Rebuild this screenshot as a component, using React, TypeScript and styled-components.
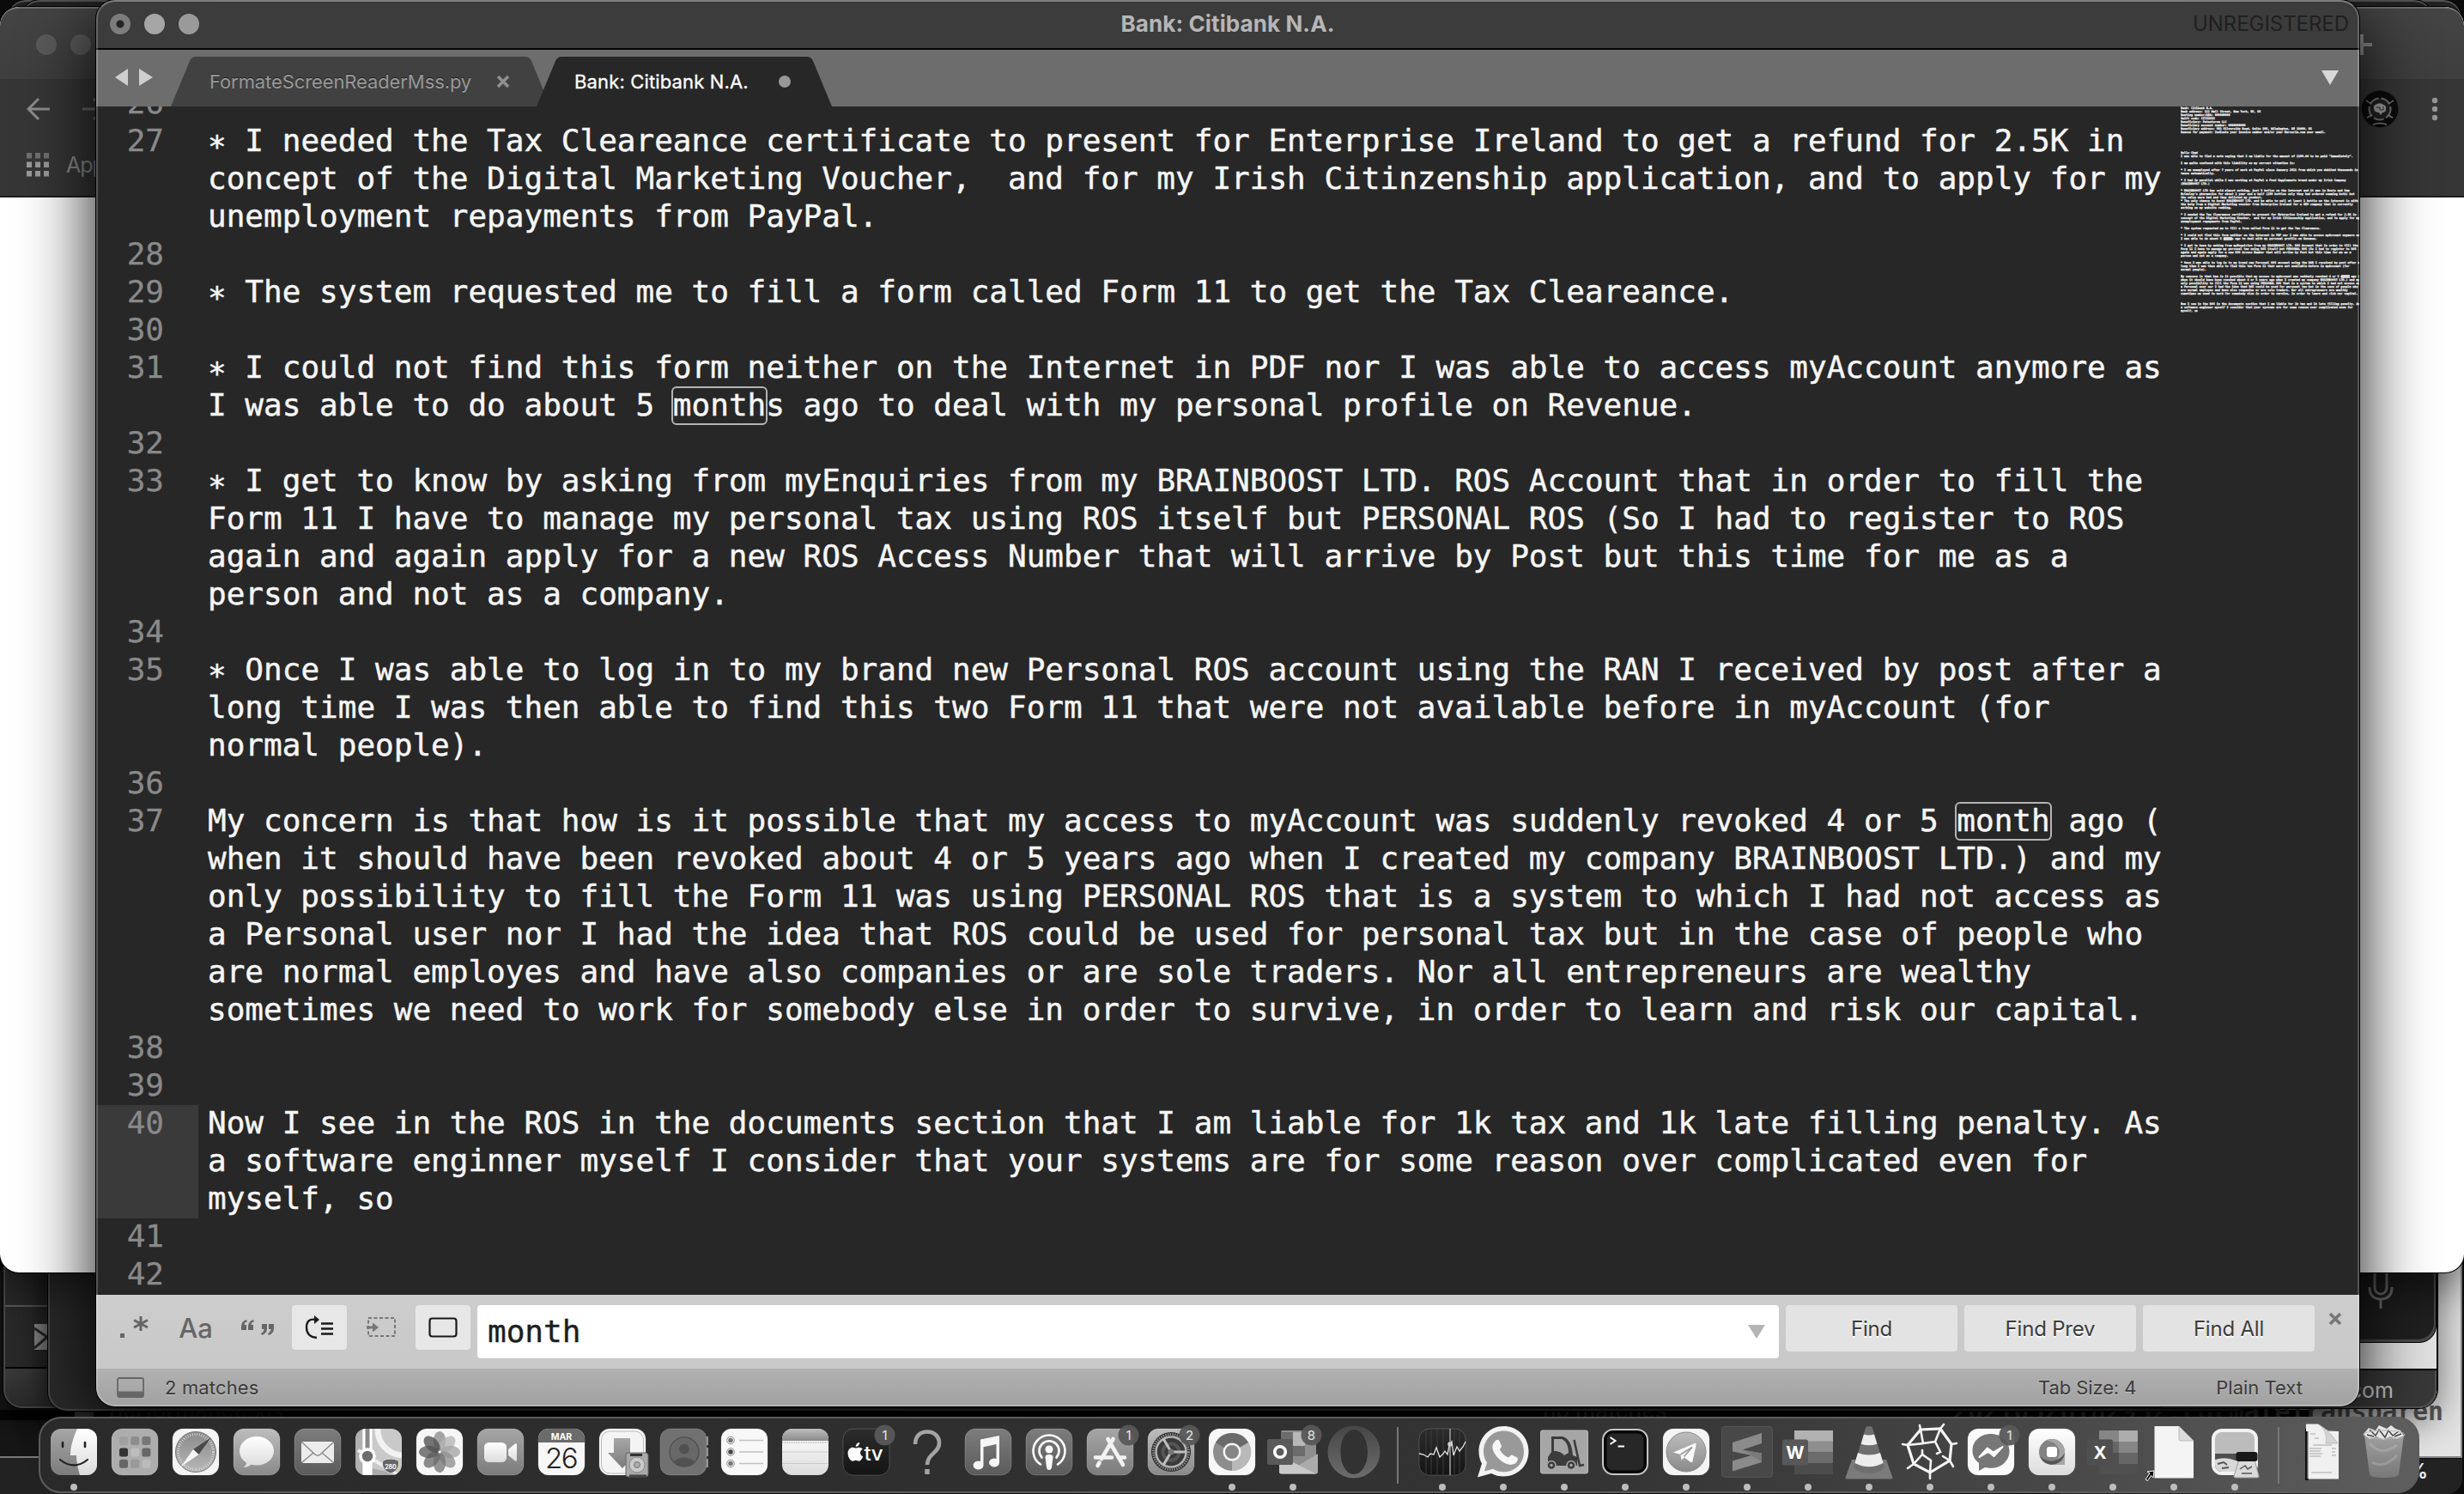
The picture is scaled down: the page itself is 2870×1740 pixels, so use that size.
import React from "react";
import styled, { createGlobalStyle, css } from "styled-components";

const UI = `Inter, "Liberation Sans", sans-serif`;
const MONO = `"DejaVu Sans Mono", "Liberation Mono", monospace`;

const Global = createGlobalStyle`
  html, body { margin: 0; background: #0b0b0b; }
  * { box-sizing: border-box; }
`;

const Desktop = styled.div`
  position: relative;
  width: 2870px;
  height: 1740px;
  overflow: hidden;
  background: #0c0c0c;
  font-family: ${UI};
`;

/* ---------- windows on the desktop ---------- */

const WindowFrame = styled.section<{ $x: number; $y: number; $w: number; $h: number }>`
  position: absolute;
  left: ${(p) => p.$x}px;
  top: ${(p) => p.$y}px;
  width: ${(p) => p.$w}px;
  height: ${(p) => p.$h}px;
  display: flex;
  flex-direction: column;
  overflow: hidden;
`;

const TopPeek = styled(WindowFrame)`
  background: #262626;
  border-radius: 22px 22px 0 0;
  border: 1px solid #000;
  box-shadow: inset 0 2px 0 #5a5a5a;
`;

const PaleWindow = styled(WindowFrame)`
  background: #e4e4e4;
  border-right: 2px solid #8a8a8a;
  border-bottom: 2px solid #8a8a8a;
`;

const FileName = styled.div`
  font: 700 29.7px/30px ${MONO};
  color: #5c5c5c;
  text-align: right;
  padding-right: 20px;
  white-space: pre;
`;

const MenuStrip = styled(WindowFrame)`
  background: #222;
  border-top: 1px solid #111;
  color: #eee;
  font: 600 24px/30px ${UI};
  align-items: flex-end;
  padding-right: 40px;
  border-radius: 0 0 18px 0;
`;

const LeftDesk = styled(WindowFrame)`
  background: linear-gradient(#1d1d1d, #141414);
`;
const LeftDeskFoot = styled.div`
  margin-top: auto;
  height: 44px;
  border-top: 2px solid #777;
  background: #222;
`;

const DarkWindow = styled(WindowFrame)`
  background: linear-gradient(90deg, #2a2a2a, #1d1d1d);
  border-radius: 0 0 22px 22px;
  border: 2px solid #474747;
  border-top: 0;
  box-shadow: 0 0 0 1px #000, 0 10px 40px rgba(0, 0, 0, 0.8);
`;
const MailRow = styled.div`
  height: 74px;
  margin-top: 120px;
  border-top: 2px solid #5a5a5a;
  border-bottom: 2px solid #000;
  display: flex;
  align-items: center;
  padding: 0 0 0 34px;
`;
const MailFoot = styled.div`
  flex: 1;
  background: linear-gradient(#3a3a3a, #2a2a2a);
`;

const PeekStrip = styled(WindowFrame)`
  flex-direction: row;
  align-items: flex-start;
  background: #050505;
`;
const PeekText = styled.span<{ $left: number; $size: number }>`
  margin-left: ${(p) => p.$left}px;
  font: 500 ${(p) => p.$size}px/${(p) => p.$size}px ${UI};
  color: #4a4a4a;
  margin-top: -12px;
  white-space: pre;
`;
const PeekBlock = styled.i`
  width: 22px;
  height: 10px;
  margin-left: 87px;
  background: #7a7a7a;
`;

const SideWindow = styled(WindowFrame)`
  background: linear-gradient(90deg, #8d8d8d, #e2e2e2 80%);
  border-radius: 0 0 22px 22px;
  border-right: 1px solid #000;
  box-shadow: 0 0 0 1px #000, 0 12px 46px rgba(0, 0, 0, 0.55);
`;
const MicPanel = styled.div`
  height: 164px;
  background: linear-gradient(#191919, #212121);
  border-radius: 0 0 20px 20px;
  border: 1px solid #000;
  box-shadow: inset -2px -3px 0 #4a4a4a;
  display: flex;
  justify-content: flex-end;
  align-items: flex-end;
  padding: 0 48px 38px 0;
`;
const SideFoot = styled.div`
  margin-top: auto;
  height: 46px;
  border-top: 2px solid #000;
  background: #383838;
  border-radius: 0 0 20px 20px;
  box-shadow: inset -2px -2px 0 #505050;
  color: #c8c8c8;
  font: 400 25px/46px ${UI};
  text-align: right;
  padding-right: 50px;
`;

const BrowserWindow = styled(WindowFrame)`
  background: #fff;
  border-radius: 22px;
  box-shadow: 0 0 0 1px #000, 0 16px 50px rgba(0, 0, 0, 0.55);
`;
const BrowserTabs = styled.div`
  height: 84px;
  background: linear-gradient(#444, #3e3e3e);
  border-top: 2px solid #6d6d6d;
  border-radius: 22px 22px 0 0;
  display: flex;
  align-items: center;
  justify-content: space-between;
  padding: 2px 106px 0 42px;
`;
const BrowserTools = styled.div`
  height: 138px;
  background: #363636;
  border-bottom: 2px solid #1c1c1c;
  display: grid;
  grid-template-columns: auto auto;
  grid-template-rows: 70px 59px;
  align-items: center;
  align-content: start;
  justify-content: space-between;
`;
const Cluster = styled.div<{ $gap: number; $pl?: number; $pr?: number }>`
  display: flex;
  align-items: center;
  gap: ${(p) => p.$gap}px;
  padding-left: ${(p) => p.$pl ?? 0}px;
  padding-right: ${(p) => p.$pr ?? 0}px;
`;
const AppsLabel = styled.span`
  font: 400 25px/30px ${UI};
  letter-spacing: -1px;
  color: #8b8b8b;
`;

const Light = styled.i<{ $c: string; $edited?: boolean }>`
  width: 24px;
  height: 24px;
  border-radius: 50%;
  background: ${(p) => (p.$edited ? `radial-gradient(circle, #242424 0 4px, ${p.$c} 5px)` : p.$c)};
`;

/* ---------- editor window ---------- */

const EditorWindow = styled(WindowFrame)`
  border-radius: 22px;
  background: #272727;
  box-shadow: 0 0 0 1px #000, 0 22px 84px rgba(0, 0, 0, 0.95);
  &::after {
    content: "";
    position: absolute;
    inset: 0;
    border-radius: 22px;
    border: 2px solid rgba(255, 255, 255, 0.22);
    border-top-color: rgba(255, 255, 255, 0.34);
    pointer-events: none;
  }
`;

const TitleBar = styled.header`
  flex: none;
  height: 58px;
  background: #3c3c3c;
  border-bottom: 2px solid #060606;
  display: grid;
  grid-template-columns: 1fr auto 1fr;
  align-items: center;
`;
const Title = styled.h1`
  margin: 0;
  font: 700 26px/56px ${UI};
  letter-spacing: 0.1px;
  color: #b6b6b6;
`;
const Unregistered = styled.span`
  justify-self: end;
  padding-right: 12px;
  font: 400 24px/56px ${UI};
  letter-spacing: -0.05px;
  color: #202020;
`;

const TabBar = styled.nav`
  flex: none;
  height: 66px;
  background: #6d6d6d;
  display: flex;
  align-items: flex-end;
`;
const TabArrows = styled.div`
  width: 87px;
  height: 66px;
  padding: 0 0 2px 22px;
  display: flex;
  align-items: center;
`;
const Tab = styled.div<{ $w: number; $active?: boolean }>`
  width: ${(p) => p.$w}px;
  height: 58px;
  display: flex;
  align-items: center;
  justify-content: space-between;
  font: 400 22px/58px ${UI};
  white-space: nowrap;
  clip-path: path("M0 58 L22 5 Q24 0 30 0 H${(p) => p.$w - 30} Q${(p) => p.$w - 24} 0 ${(p) => p.$w - 22} 5 L${(p) => p.$w} 58 Z");
  ${(p) =>
    p.$active
      ? css`
          margin-left: -16px;
          padding: 0 48px 0 44px;
          background: #272727;
          color: #fff;
          letter-spacing: 0.15px;
          -webkit-text-stroke: 0.3px #fff;
        `
      : css`
          padding: 0 47px 0 45px;
          background: #414141;
          color: #999;
          letter-spacing: -0.1px;
          text-shadow: 0 -1px 0 #222;
        `}
`;
const ModifiedDot = styled.i`
  width: 14px;
  height: 14px;
  border-radius: 50%;
  background: #979797;
`;
const TabMenu = styled.div`
  margin-left: auto;
  height: 66px;
  display: flex;
  align-items: center;
  padding: 0 24px 2px 0;
`;

const Body = styled.main`
  flex: 1;
  min-height: 0;
  display: flex;
  overflow: hidden;
`;
const Lines = styled.div`
  flex: 1;
  margin-top: -25px;
`;
const Line = styled.div`
  display: flex;
  font: 36px/41px ${MONO};
`;
const LineNo = styled.div<{ $active?: boolean }>`
  width: 119px;
  padding-right: 40px;
  text-align: right;
  color: #898989;
  -webkit-text-stroke: 0.3px #898989;
  background: ${(p) => (p.$active ? "#3a3a3a" : "transparent")};
`;
const LineText = styled.div`
  padding-left: 11px;
  white-space: pre;
  color: #f6f6f6;
  -webkit-text-stroke: 0.45px #f6f6f6;
`;
const Row = styled.div`
  height: 44px;
`;
const Star = styled.span`
  line-height: 0;
  vertical-align: -7px;
`;
const Match = styled.mark`
  position: relative;
  background: none;
  color: inherit;
  &::after {
    content: "";
    position: absolute;
    inset: -1px -2px -3px -2px;
    border: 2px solid #b4b4b4;
    border-radius: 6px;
  }
`;

const Minimap = styled.aside`
  width: 208px;
  overflow: hidden;
  font: 700 3.3px/4px ${MONO};
  color: #f4f4f4;
  -webkit-text-stroke: 0.25px #f4f4f4;
  white-space: pre;
`;
const MiniRow = styled.div`
  height: 4px;
`;
const MiniMatch = styled.mark`
  background: #bdbdbd;
  color: #bdbdbd;
`;

const FindPanel = styled.div`
  flex: none;
  height: 86px;
  background: linear-gradient(#cdcdcd, #c8c8c8);
  display: flex;
  align-items: flex-start;
  gap: 8px;
  padding: 12px 0 0 12px;
`;
const Toggle = styled.button<{ $on?: boolean }>`
  width: 64px;
  height: 52px;
  padding: 0;
  border: 0;
  border-radius: 4px;
  display: grid;
  place-items: center;
  background: ${(p) => (p.$on ? "#e7e7e7" : "transparent")};
  color: #666;
  font: 500 31px/54px ${UI};
`;
const FindInput = styled.div`
  width: 1516px;
  height: 62px;
  border-radius: 4px;
  background: #fff;
  display: flex;
  align-items: center;
  justify-content: space-between;
  padding: 0 16px 0 12px;
  font: 36px/56px ${MONO};
  color: #1e1e1e;
  -webkit-text-stroke: 0.4px #1e1e1e;
`;
const FindButton = styled.button`
  width: 200px;
  height: 54px;
  padding: 2px 0 0;
  border: 0;
  border-radius: 4px;
  background: #e3e3e3;
  color: #3c3c3c;
  font: 400 24px/52px ${UI};
  letter-spacing: -0.2px;
  text-shadow: 0 2px 0 #fff;
`;
const CloseFind = styled.div`
  padding: 8px 0 0 8px;
`;

const StatusBar = styled.footer`
  flex: none;
  height: 44px;
  background: linear-gradient(#b1b1b1, #a1a1a1);
  display: flex;
  align-items: center;
  padding: 0 66px 0 24px;
  font: 400 22px/42px ${UI};
  color: #3a3a3a;
  text-shadow: 0 1px 0 #c8c8c8;
`;
const StatusText = styled.span<{ $ml: string; $ls?: number }>`
  margin-left: ${(p) => p.$ml};
  letter-spacing: ${(p) => p.$ls ?? 0}px;
`;

/* ---------- dock ---------- */

const DockBar = styled.div`
  position: absolute;
  left: 45px;
  top: 1650px;
  width: 2773px;
  height: 89px;
  padding: 7px 0 0 3px;
  display: flex;
  border-radius: 26px;
  border: 2px solid #5c5c5c;
  background: linear-gradient(90deg, #2a2a2a, #303030 45%, #343434 66%, #474747 84%, #5e5e5e);
`;
const Slot = styled.div`
  width: 71px;
  display: flex;
  flex-direction: column;
  align-items: center;
  svg { display: block; overflow: visible; }
`;
const Running = styled.i`
  width: 8px;
  height: 8px;
  margin-top: 5px;
  border-radius: 50%;
  background: #bcbcbc;
`;
const Divider = styled.div`
  width: 32px;
  display: flex;
  justify-content: center;
  &::before {
    content: "";
    width: 2px;
    height: 66px;
    margin-top: 3px;
    background: #767676;
  }
`;

/* ---------- document ---------- */

type Entry = { n: number; rows: string[] };

const entries: Entry[] = [
  { n: 26, rows: [""] },
  {
    n: 27,
    rows: [
      "* I needed the Tax Cleareance certificate to present for Enterprise Ireland to get a refund for 2.5K in",
      "concept of the Digital Marketing Voucher,  and for my Irish Citinzenship application, and to apply for my",
      "unemployment repayments from PayPal.",
    ],
  },
  { n: 28, rows: [""] },
  { n: 29, rows: ["* The system requested me to fill a form called Form 11 to get the Tax Cleareance."] },
  { n: 30, rows: [""] },
  {
    n: 31,
    rows: [
      "* I could not find this form neither on the Internet in PDF nor I was able to access myAccount anymore as",
      "I was able to do about 5 months ago to deal with my personal profile on Revenue.",
    ],
  },
  { n: 32, rows: [""] },
  {
    n: 33,
    rows: [
      "* I get to know by asking from myEnquiries from my BRAINBOOST LTD. ROS Account that in order to fill the",
      "Form 11 I have to manage my personal tax using ROS itself but PERSONAL ROS (So I had to register to ROS",
      "again and again apply for a new ROS Access Number that will arrive by Post but this time for me as a",
      "person and not as a company.",
    ],
  },
  { n: 34, rows: [""] },
  {
    n: 35,
    rows: [
      "* Once I was able to log in to my brand new Personal ROS account using the RAN I received by post after a",
      "long time I was then able to find this two Form 11 that were not available before in myAccount (for",
      "normal people).",
    ],
  },
  { n: 36, rows: [""] },
  {
    n: 37,
    rows: [
      "My concern is that how is it possible that my access to myAccount was suddenly revoked 4 or 5 month ago (",
      "when it should have been revoked about 4 or 5 years ago when I created my company BRAINBOOST LTD.) and my",
      "only possibility to fill the Form 11 was using PERSONAL ROS that is a system to which I had not access as",
      "a Personal user nor I had the idea that ROS could be used for personal tax but in the case of people who",
      "are normal employes and have also companies or are sole traders. Nor all entrepreneurs are wealthy",
      "sometimes we need to work for somebody else in order to survive, in order to learn and risk our capital.",
    ],
  },
  { n: 38, rows: [""] },
  { n: 39, rows: [""] },
  {
    n: 40,
    rows: [
      "Now I see in the ROS in the documents section that I am liable for 1k tax and 1k late filling penalty. As",
      "a software enginner myself I consider that your systems are for some reason over complicated even for",
      "myself, so",
    ],
  },
  { n: 41, rows: [""] },
  { n: 42, rows: [""] },
];

const preface = [
  "Bank: Citibank N.A.",
  "Bank address: 111 Wall Street, New York, NY, US",
  "Routing number/ABA: 000000000",
  "Swift code: CITIUS33",
  "Beneficiary: Patentorea LLC",
  "Beneficiary account number: 0000000000",
  "Beneficiary address: 501 Silverside Road, Suite 105, Wilmington, DE 19809, US",
  "Reason for payment: Indicate your invoice number and/or your Mercuria.com user email.",
  "", "", "", "", "",
  "Hello Chad",
  "I was able to find a note saying that I am liable for the amount of 2100.84 to be paid \"immediately\".",
  "",
  "I am quite confused with this liability as my current situation is:",
  "",
  "* I am unemployed after 7 years of work at PayPal since January 2021 from which you debited thousands in",
  "taxes automatically.",
  "",
  "* I had in parallel while I was working at PayPal a Food Supplements brand under my Irish Company",
  "(BRAINBOOST LTD.)",
  "",
  "* BRAINBOOST LTD has sold almost nothing, just 5 botles on the internet and it was in Boots and Sam",
  "McCauley's pharmacies for about 1 year and a half (250 bottles only they had ordered summing both) but",
  "the sales were bad and they delisted my product.",
  "* The only chance to boost BRAINBOOST LTD. and be able to sell at least 1 bottle on the internet is with",
  "the help from a Digital Marketing voucher from Enterprise Ireland for a SEO company that is currently",
  "working on my website ranking.",
];

const miniRows = [...preface, ...entries.flatMap((e) => e.rows)];

const renderRow = (text: string) =>
  text.split(/(month|^\*)/).map((part, i) =>
    part === "month" ? <Match key={i}>{part}</Match> : part === "*" ? <Star key={i}>*</Star> : part
  );

const renderMini = (text: string) =>
  text.split(/(month)/).map((part, i) => (part === "month" ? <MiniMatch key={i}>{part}</MiniMatch> : part));

/* ---------- dock artwork ---------- */

const HiddenDefs = styled.svg`
  position: absolute;
  width: 0;
  height: 0;
`;

const Defs = () => (
  <HiddenDefs>
    <defs>
      {(
        [
          ["gLight", "#ffffff", "#dcdcdc"],
          ["gMid", "#bdbdbd", "#8a8a8a"],
          ["gMidR", "#8a8a8a", "#b8b8b8"],
          ["gGrey", "#7d7d7d", "#5b5b5b"],
          ["gDark", "#2c2c2c", "#141414"],
          ["gSteel", "#a6a6a6", "#7c7c7c"],
          ["gOpera", "#464646", "#6c6c6c"],
        ] as const
      ).map(([id, a, b]) => (
        <linearGradient id={id} key={id} x1="0" y1="0" x2="0" y2="1">
          <stop offset="0" stopColor={a} />
          <stop offset="1" stopColor={b} />
        </linearGradient>
      ))}
      <clipPath id="tileClip">
        <rect x="5" y="5" width="54" height="54" rx="12" />
      </clipPath>
    </defs>
  </HiddenDefs>
);

const Tile = ({ fill }: { fill: string }) => (
  <rect x="5" y="5" width="54" height="54" rx="12" fill={fill} stroke="rgba(255,255,255,.18)" />
);

const Badge = ({ n }: { n: number }) => (
  <g>
    <circle cx="53.5" cy="12.5" r="12" fill="#585858" fillOpacity=".95" />
    <text x="53.5" y="18" fontSize="15" fontFamily="Inter, sans-serif" textAnchor="middle" fill="#e6e6e6">
      {n}
    </text>
  </g>
);

const petals = [0, 45, 90, 135, 180, 225, 270, 315];

const art: Record<string, React.ReactNode> = {
  finder: (
    <g clipPath="url(#tileClip)">
      <rect x="5" y="5" width="54" height="54" fill="url(#gSteel)" />
      <path d="M36 5 C30 18 28 28 28 36 H35 C35 45 37 52 39 59 H60 V5Z" fill="url(#gLight)" />
      <path d="M19 21v5M45 21v5" stroke="#222" strokeWidth="2.6" strokeLinecap="round" />
      <path d="M16 41 Q32 54 48 41" stroke="#222" strokeWidth="2.2" fill="none" strokeLinecap="round" />
    </g>
  ),
  launchpad: (
    <g>
      <Tile fill="#adadad" />
      {["#a0a0a0", "#8d8d8d", "#777", "#333", "#bdbdbd", "#666", "#666", "#999", "#bbb"].map((c, i) => (
        <rect key={i} x={14 + (i % 3) * 13.2} y={14 + Math.floor(i / 3) * 13.4} width="10" height="10" rx="2.5" fill={c} />
      ))}
    </g>
  ),
  safari: (
    <g>
      <Tile fill="#f4f4f4" />
      <circle cx="32" cy="32" r="23.5" fill="url(#gMidR)" stroke="#777" />
      <circle cx="32" cy="32" r="20.5" fill="none" stroke="#ddd" strokeWidth="3" strokeDasharray=".8 1.9" />
      <path d="M50 15 L35.5 35 L29 29Z" fill="#4a4a4a" />
      <path d="M15 49 L35.5 35 L29 29Z" fill="#f6f6f6" />
    </g>
  ),
  messages: (
    <g>
      <Tile fill="url(#gMid)" />
      <path d="M32 14c-11 0-20 7.500-20 17 0 6 3.300 10.500 8 13.500 0 2-1.500 4-3.500 5.500 4 0 7-1.500 9-3.300 2 .5 4.300.8 6.500.8 11 0 20-7 20-16.500S43 14 32 14Z" fill="url(#gLight)" />
    </g>
  ),
  mail: (
    <g>
      <Tile fill="url(#gGrey)" />
      <rect x="13" y="20" width="38" height="25" rx="3" fill="#ececec" />
      <path d="M14 21 29 35q3 2.500 6 0L50 21M14 44l13-11M50 44 37 33" stroke="#888" strokeWidth="1.4" fill="none" />
    </g>
  ),
  maps: (
    <g clipPath="url(#tileClip)">
      <rect x="5" y="5" width="54" height="54" fill="#c9c9c9" />
      <path d="M5 5h8v54H5z" fill="#b0b0b0" />
      <path d="M59 36A30 30 0 0 1 31 5" stroke="#f2f2f2" strokeWidth="7" fill="none" />
      <path d="M20 50 L59 59 H20Z" fill="#aaa" />
      <path d="M8 30 L60 62" stroke="#eee" strokeWidth="4" />
      <path d="M19 5v54" stroke="#fff" strokeWidth="11" />
      <path d="M19 5v30" stroke="#888" strokeWidth="5" />
      <circle cx="19" cy="37" r="8" fill="#6d6d6d" stroke="#fff" strokeWidth="3.5" />
      <path d="M37 42q9-4 18 0c2 7-2 13-9 15-7-2-11-8-9-15Z" fill="#666" stroke="#ddd" />
      <text x="46" y="52" fontSize="7" fontFamily="Inter, sans-serif" fontWeight="700" textAnchor="middle" fill="#fff">280</text>
    </g>
  ),
  photos: (
    <g>
      <Tile fill="#f6f6f6" />
      {petals.map((a, i) => (
        <ellipse key={a} cx="32" cy="19.5" rx="7.2" ry="11.5" fill={["#8d8d8d", "#b5b5b5", "#a5a5a5", "#8f8f8f", "#777", "#6c6c6c", "#5c5c5c", "#505050"][i]} fillOpacity=".78" transform={`rotate(${a} 32 32)`} />
      ))}
      <circle cx="32" cy="32" r="1.5" fill="#fff" />
    </g>
  ),
  facetime: (
    <g>
      <Tile fill="url(#gSteel)" />
      <rect x="13" y="21" width="26" height="23" rx="5.5" fill="url(#gLight)" />
      <path d="M41 29 49 22.500q2-1 2 1v18q0 2-2 1L41 36Z" fill="url(#gLight)" />
    </g>
  ),
  calendar: (
    <g>
      <Tile fill="#f7f7f7" />
      <path d="M5 21V17A12 12 0 0 1 17 5H47A12 12 0 0 1 59 17V21Z" fill="#6b6b6b" />
      <text x="32" y="17.5" fontSize="10.5" fontFamily="Inter, sans-serif" fontWeight="700" textAnchor="middle" fill="#fff">MAR</text>
      <text x="31.5" y="51" fontSize="33" fontFamily="Inter, sans-serif" fontWeight="300" letterSpacing="-1.5" textAnchor="middle" fill="#222">26</text>
    </g>
  ),
  installer: (
    <g>
      <Tile fill="#f4f4f4" />
      <rect x="7.5" y="8" width="49" height="49" rx="10" fill="none" stroke="#bbb" />
      <path d="M22 16h19v17h8L32 51 15 33h7Z" fill="url(#gSteel)" />
      <rect x="36" y="33" width="26" height="28" rx="3" fill="#a9a9a9" stroke="#666" />
      <circle cx="49" cy="47" r="9" fill="#c9c9c9" stroke="#888" />
      <circle cx="49" cy="47" r="3.5" fill="#aaa" stroke="#777" />
      <path d="M41 35.500h14" stroke="#333" strokeWidth="3" />
      <path d="M40 60h20" stroke="#444" strokeWidth="3" />
    </g>
  ),
  contacts: (
    <g>
      <path d="M57 14h4v10h-4zM57 27h4v10h-4zM57 40h4v10h-4z" fill="#8f8f8f" />
      <Tile fill="#717171" />
      <circle cx="33" cy="32" r="17" fill="#686868" stroke="#525252" strokeWidth="1.5" />
      <circle cx="33" cy="28.5" r="6" fill="#515151" />
      <path d="M21 43q12-9 24 0-4.500 6-12 6t-12-6Z" fill="#515151" />
    </g>
  ),
  reminders: (
    <g>
      <Tile fill="#f8f8f8" />
      {[18.5, 32, 45.5].map((y, i) => (
        <g key={y}>
          <circle cx="16" cy={y} r="4.3" fill="none" stroke="#888" strokeWidth="1" />
          <circle cx="16" cy={y} r="2.8" fill={i === 1 ? "#444" : "#777"} />
          <path d={`M26 ${y}h28`} stroke="#c2c2c2" strokeWidth="1.5" />
        </g>
      ))}
    </g>
  ),
  notes: (
    <g clipPath="url(#tileClip)">
      <rect x="5" y="5" width="54" height="54" fill="url(#gLight)" />
      <rect x="5" y="5" width="54" height="14" fill="url(#gMid)" />
      <path d="M5 21h54" stroke="#999" strokeDasharray="1 1" />
      <path d="M5 32h54M5 45.500h54" stroke="#ccc" />
    </g>
  ),
  tv: (
    <g>
      <Tile fill="url(#gDark)" />
      <path
        transform="translate(-4.500 -3.500) scale(1.14)"
        d="M24.500 26.500c-.9 0-2 .7-3 .7s-2-.7-3.300-.7c-2.600 0-5 2.200-5 6 0 4 2.700 8 4.900 8 1.200 0 1.800-.8 3.300-.8s2 .8 3.200.8c2 0 3.600-3.200 4-4.700-3.700-1.600-3.200-6.300-.2-7.500-.9-1.200-2.400-1.800-3.900-1.800ZM21.300 25.800c2.500 0 4-2.300 3.800-4.300-2.300.3-4 2.200-3.800 4.300Z"
        fill="#fff"
      />
      <text x="29.5" y="41.5" fontSize="24" fontFamily="Inter, sans-serif" fontWeight="500" letterSpacing="-.5" fill="#fff">tv</text>
      <Badge n={1} />
    </g>
  ),
  question: (
    <g>
      <path d="M18 23c0-9 5.500-14.500 14-14.500S46 14 46 22c0 11-14 12-14 25" stroke="#a4a4a4" strokeWidth="4.6" fill="none" />
      <rect x="29.2" y="52" width="5.500" height="6" fill="#a4a4a4" />
    </g>
  ),
  music: (
    <g>
      <Tile fill="url(#gGrey)" />
      <path d="M23 17.500 45 13v31.500a6 5 0 1 1-3.500-4.600V23l-15 3.200V47.500A6 5 0 1 1 23 43Z" fill="#f6f6f6" />
    </g>
  ),
  podcasts: (
    <g>
      <Tile fill="url(#gGrey)" />
      <g fill="none" stroke="#fff" strokeWidth="2.6" strokeLinecap="round">
        <path d="M22 46.500A18.500 18.500 0 1 1 42 46.500" />
        <path d="M23.500 38.500A11.500 11.500 0 1 1 40.500 38.500" />
      </g>
      <circle cx="32" cy="29" r="4.5" fill="#fff" />
      <path d="M27.500 38q0-3 4.500-3t4.500 3l-1.500 12q-.5 3-3 3t-3-3Z" fill="#fff" />
    </g>
  ),
  appstore: (
    <g>
      <Tile fill="url(#gSteel)" />
      <g stroke="#f2f2f2" strokeWidth="4.6" strokeLinecap="round" fill="none">
        <path d="M35.500 17 22 40M19.500 44.500l-2 3.500M29.500 17 47 47M15 38.500h19M42 38.500h7" />
      </g>
      <Badge n={1} />
    </g>
  ),
  settings: (
    <g>
      <Tile fill="url(#gMid)" />
      <circle cx="32" cy="32" r="23" fill="#2b2b2b" />
      <circle cx="32" cy="32" r="20.5" fill="none" stroke="#8a8a8a" strokeWidth="3" strokeDasharray="1.500 1.200" />
      <circle cx="32" cy="32" r="17.5" fill="#3a3a3a" stroke="#b5b5b5" strokeWidth="2.5" />
      <circle cx="32" cy="32" r="9.5" fill="none" stroke="#555" strokeWidth="4" />
      <path d="M32 32h18M32 32l-9-15.500M32 32l-9 15.500" stroke="#c0c0c0" strokeWidth="3" />
      <circle cx="32" cy="32" r="3.5" fill="#777" />
      <Badge n={2} />
    </g>
  ),
  chrome: (
    <g>
      <Tile fill="#f6f6f6" />
      <circle cx="32" cy="32" r="22" fill="#8d8d8d" />
      <path d="M32 32 L12.900 21A22 22 0 0 1 51.100 21Z" fill="#6a6a6a" />
      <path d="M32 32 L51.100 21A22 22 0 0 1 32 54Z" fill="#b9b9b9" />
      <circle cx="32" cy="32" r="10.5" fill="#f6f6f6" />
      <circle cx="32" cy="32" r="8" fill="#858585" />
    </g>
  ),
  outlook: (
    <g>
      <rect x="18" y="7" width="41" height="50" rx="2" fill="#8e8e8e" />
      <path d="M18 9h14v16H18zM32 25h14v12H32z" fill="#6c6c6c" />
      <path d="M32 9h14v16H32z" fill="#b8b8b8" />
      <path d="M16 36 38 48 61 34V55q0 2.500-2.500 2.500H18.500q-2.500 0-2.500-2.500Z" fill="#ababab" />
      <path d="M16 36 59 57.500H18.500q-2.500 0-2.500-2.500Z" fill="#c9c9c9" />
      <rect x="2" y="17" width="30" height="30" rx="2.5" fill="#5a5a5a" />
      <circle cx="17" cy="32" r="6.3" fill="none" stroke="#fff" strokeWidth="3.6" />
      <Badge n={8} />
    </g>
  ),
  opera: (
    <path
      fillRule="evenodd"
      d="M32 1.500A30.500 30.500 0 0 1 32 62.500A30.500 30.500 0 0 1 32 1.500ZM32 6C23 6 16.500 17.500 16.500 32S23 58 32 58 48 46.500 48 32 41 6 32 6Z"
      fill="url(#gOpera)"
    />
  ),
  activity: (
    <g>
      <Tile fill="url(#gDark)" />
      <path d="M13 6v52M19 6v52M26 6v52M33 6v52M46 6v52M52 6v52" stroke="#3c3c3c" />
      <path d="M41 5v54" stroke="#a2a2a2" strokeWidth="1.5" />
      <path d="M5 34l5 1 5 3 3-4 4 1 3-8 4 11 4-4 2-3 3 4 2-10 3-5 2 16 4-10 3 5 4-5 3-6" stroke="#e2e2e2" strokeWidth="1.3" fill="none" />
      <circle cx="41" cy="23" r="2.8" fill="#ccc" />
    </g>
  ),
  whatsapp: (
    <g>
      <path d="M32.500 2C16 2 3.500 15 3.500 31.500c0 5.500 1.300 10 3.500 14L2 61.500 18 57c4.500 2.500 9 3.500 14.500 3.500C49 60.500 61.500 48 61.500 31.500S49 2 32.500 2Z" fill="#f3f3f3" />
      <path d="M32.500 7.500c-13.500 0-23.500 10.500-23.500 24 0 5 1.500 9.500 4 13l-3 10 10-2.800c3.500 2.300 8 3.600 12.500 3.600C46 55.300 56 45 56 31.500S46 7.500 32.500 7.500Z" fill="#999" />
      <path d="M23.500 18.500c2-1.500 3.500-.5 4 .7l2.300 5.500c.4 1-.2 2.200-2 4.200 2.500 5 6 8 10.500 9.700 1.500-1.300 2.500-3.200 3.800-3l6 3c1.200.8.8 3-.3 5-3 4-8 4-13 2C27 42 20 33.500 19.300 27c-.3-3.500 1.700-6.500 4.200-8.500Z" fill="#f7f7f7" />
    </g>
  ),
  forklift: (
    <g>
      <rect x="4.5" y="7" width="55" height="50" rx="2" fill="#a6a6a6" stroke="#bcbcbc" />
      <path d="M17 14h13c7 2 11 9 12 22l5 2v10H13V38l4-6Z" fill="#3c3c3c" />
      <path d="M20 17h9c5 2 8 8 8 16l-5 3c-5-5-9-5-12-5Z" fill="#a6a6a6" />
      <path d="M43.500 18 50 48l5-1" stroke="#3c3c3c" strokeWidth="2.6" fill="none" />
      <circle cx="17" cy="47.5" r="5" fill="#3c3c3c" stroke="#a6a6a6" strokeWidth="1.5" />
      <circle cx="40" cy="47.5" r="5" fill="#3c3c3c" stroke="#a6a6a6" strokeWidth="1.5" />
      <circle cx="17" cy="47.5" r="1.8" fill="#a6a6a6" />
      <circle cx="40" cy="47.5" r="1.8" fill="#a6a6a6" />
    </g>
  ),
  terminal: (
    <g>
      <rect x="6" y="6" width="52" height="52" rx="12" fill="#050505" stroke="#c6c6c6" strokeWidth="2" />
      <rect x="10.5" y="10.5" width="43" height="43" rx="7" fill="#272727" />
      <path d="M14.500 15l6 4-6 4M23.500 25.500h7.500" stroke="#fff" strokeWidth="2" fill="none" />
    </g>
  ),
  telegram: (
    <g>
      <Tile fill="#f4f4f4" />
      <circle cx="32" cy="32" r="23" fill="url(#gMid)" stroke="#888" />
      <path d="M17 32.500 42 22q2-.6 1.600 1.600L39.500 43q-.8 2-2.600.8L30 38.500l-3.500 3-1-6.500Z" fill="#fafafa" />
      <path d="M25.500 35 39 26.500 29.500 37.500" stroke="#999" strokeWidth="1.5" fill="none" />
    </g>
  ),
  sublime: (
    <g>
      <rect x="2.5" y="2.5" width="59" height="59" rx="3" fill="#484848" stroke="#555" />
      <path d="M15 21 49 10v12L26.500 29.500 49 33.500V44L15 54.500V42.500L37 36 15 31.500Z" fill="#8b8b8b" />
      <path d="M26.500 29.500 49 33.500V44L37 36Z" fill="#7a7a7a" />
    </g>
  ),
  word: (
    <g>
      <rect x="16" y="7" width="45" height="13" fill="#b2b2b2" />
      <rect x="16" y="19.5" width="45" height="13" fill="#8e8e8e" />
      <rect x="16" y="32.5" width="45" height="13" fill="#6c6c6c" />
      <rect x="16" y="45" width="45" height="13" fill="#4c4c4c" />
      <rect x="2" y="17.5" width="30" height="30" rx="2.5" fill="#585858" />
      <text x="17" y="40" fontSize="20.5" fontFamily="Inter, sans-serif" fontWeight="700" textAnchor="middle" fill="#fff">W</text>
    </g>
  ),
  vlc: (
    <g>
      <path d="M12 41h40l7.500 21q.3 1.500-1.500 1.500H6q-1.800 0-1.500-1.500Z" fill="#7b7b7b" />
      <path d="M28 4q.8-2 4-2t4 2l14 46q-5 7-18 7t-18-7Z" fill="#6f6f6f" />
      <path d="M26 11.500q6 2 12 0l3.400 11.200q-9.400 3-18.800 0Z" fill="#ededed" />
      <path d="M19 33q13 5 26 0l3.600 12q-16.600 8.500-33.200 0Z" fill="#ededed" />
    </g>
  ),
  spider: (
    <g stroke="#f5f5f5" strokeWidth="3" strokeLinecap="round" fill="none">
      <path d="M21 6 44 5 57 23 55 42 32 56 13 46 6 24Z" strokeWidth="3.2" />
      <path d="M21 6 20 1M44 5l4-5M57 23l6-1M55 42l4 7M32 56v7M13 46l-7 5M6 24 0 23M21 6l3 16-18 2M24 22l14-2 6-15M38 20l6 12-4 2M13 46l10-11 10 7-1 14M23 35l0-5M55 42l-8-5" strokeWidth="2.6" />
    </g>
  ),
  messenger: (
    <g>
      <Tile fill="#fafafa" />
      <path d="M32 11C19.500 11 10.500 19.500 10.500 30.500c0 6 2.800 11 7.500 14.500V54l7-4c2 .5 4.500.8 7 .8C44.500 50.800 53.500 42 53.500 31S44.500 11 32 11Z" fill="#777" />
      <path d="M18.500 38 28 27.500l6.500 5 11-6.500-10 11-6.500-5Z" fill="#fff" stroke="#fff" strokeWidth="2" strokeLinejoin="round" />
      <Badge n={1} />
    </g>
  ),
  recorder: (
    <g>
      <Tile fill="url(#gLight)" />
      <circle cx="32" cy="32" r="15" fill="#828282" />
      <path d="M32 17a15 15 0 0 1 15 15V47H32A20 20 0 0 0 41 32 16 16 0 0 0 25 19Z" fill="#a5a5a5" />
      <path d="M18 37a15 15 0 0 0 29-4 18 18 0 0 1-29 4Z" fill="#555" />
      <rect x="26" y="26" width="12" height="12" rx="3" fill="#fff" />
    </g>
  ),
  excel: (
    <g>
      <rect x="16" y="7" width="45" height="51" rx="2" fill="#505050" />
      <path d="M16 7h23v13H16zM39 20h22v13H39z" fill="#868686" />
      <path d="M39 7h22v13H39z" fill="#adadad" />
      <path d="M16 20h23v13H16zM39 33h22v13H39z" fill="#666" />
      <rect x="2" y="17.5" width="30" height="30" rx="2.5" fill="#4f4f4f" />
      <text x="17" y="40" fontSize="20.5" fontFamily="Inter, sans-serif" fontWeight="700" textAnchor="middle" fill="#fff">X</text>
    </g>
  ),
  document: (
    <g>
      <path d="M9.500 2H38L55 19V62.500H9.500Z" fill="#f4f4f4" />
      <path d="M38 2 55 19H40q-2 0-2-2Z" fill="#dcdcdc" stroke="#aaa" strokeWidth=".7" />
      <path d="M-1 64l5-7-3-2 8-1-1 8-2.500-2.500-4 6Z" fill="#111" stroke="#fff" strokeWidth="1" />
    </g>
  ),
  preview: (
    <g>
      <rect x="5" y="5" width="54" height="54" rx="12" fill="#f2f2f2" />
      <rect x="9" y="9" width="46" height="46" rx="8" fill="#bcbcbc" />
      <path d="M9 34h46v13a8 8 0 0 1-8 8H17a8 8 0 0 1-8-8Z" fill="#4e4e4e" />
      <path d="M9 41q12-4 24 1 12 3 22 0v5a8 8 0 0 1-8 8H17a8 8 0 0 1-8-8Z" fill="#d8d8d8" />
      <path d="M12 46l7-2 4 3M17 51l8-1" stroke="#555" strokeWidth="2" fill="none" />
      <path d="M37 41h18l5 19q.5 2-2 2H33q-2.500 0-2-2Z" fill="#d9d9d9" stroke="#9a9a9a" />
      <path d="M38 52l6-4 3 4 5-3M40 57h12" stroke="#555" strokeWidth="1.5" fill="none" />
      <rect x="33.5" y="32" width="25" height="11" rx="3" fill="#181818" />
    </g>
  ),
  paper: (
    <g>
      <path d="M12 5v59h3" stroke="#111" strokeWidth="2" fill="none" />
      <path d="M12 -.5H26L38 7.500 50 8V63.500H14.500V8H12Z" fill="#f0f0f0" />
      <path d="M27 0q7 5 8 12 1 7 0 10l14 0Q40 8 27 0Z" fill="#d4d4d4" stroke="#aaa" strokeWidth=".6" />
      <path d="M17 11h6M22 16h5M20 24h22M16 28h14M16 31h13M16 34h15M16 37h13M42 28h5M42 32h4M42 36h5M18 56h24" stroke="#a5a5a5" strokeWidth="1" />
    </g>
  ),
  trash: (
    <g>
      <path d="M9 12h46l-6 46q-1 4-17 4t-17-4Z" fill="url(#gSteel)" fillOpacity=".9" />
      <path d="M15 22q14 16 32 2M18 44q14 8 29-8" stroke="#c0c0c0" strokeWidth="3" strokeOpacity=".35" fill="none" />
      <path d="M8 11l6-7 8 3 4-6 9 4 5-4 5 4 6 2 4 6-8 4-8-3-8 4-8-4-8 3Z" fill="#e6e6e6" />
      <path d="M15 6l7 7 4-7 7 9 4-8 5 6 7-5M12 12l8 2M44 14l8-3" stroke="#444" strokeWidth="1.5" fill="none" />
      <ellipse cx="32" cy="12" rx="24" ry="5" fill="none" stroke="#b5b5b5" />
    </g>
  ),
};

const pinned = [
  "finder", "launchpad", "safari", "messages", "mail", "maps", "photos", "facetime", "calendar", "installer", "contacts",
  "reminders", "notes", "tv", "question", "music", "podcasts", "appstore", "settings", "chrome", "outlook", "opera",
];
const open = [
  "activity", "whatsapp", "forklift", "terminal", "telegram", "sublime", "word", "vlc", "spider", "messenger", "recorder",
  "excel", "document", "preview",
];
const stacks = ["paper", "trash"];
const running = new Set(["finder", "chrome", "outlook", ...open]);

const DockItem = ({ name }: { name: string }) => (
  <Slot>
    <svg width="64" height="64" viewBox="0 0 64 64">{art[name]}</svg>
    {running.has(name) && <Running />}
  </Slot>
);

const Cross = ({ size, color }: { size: number; color: string }) => (
  <svg width={size} height={size} viewBox="0 0 16 16">
    <path d="M2 2l12 12M14 2 2 14" stroke={color} strokeWidth="3.6" />
  </svg>
);

export default function App() {
  return (
    <Desktop>
      <Global />
      <Defs />

      <LeftDesk $x={0} $y={1480} $w={420} $h={260}>
        <LeftDeskFoot />
      </LeftDesk>
      <PaleWindow $x={2650} $y={1460} $w={218} $h={238} />
      <MenuStrip $x={2400} $y={1698} $w={468} $h={42}>%</MenuStrip>
      <PeekStrip $x={0} $y={1642} $w={2690} $h={12}>
        <PeekBlock />
        <PeekText $left={18} $size={26}>performance.xls</PeekText>
        <PeekText $left={1466} $size={26}>no matches</PeekText>
      </PeekStrip>
      <WindowFrame $x={2240} $y={1629} $w={626} $h={40}>
        <FileName>20210326182932.FormateTransparen</FileName>
      </WindowFrame>

      <DarkWindow $x={4} $y={1400} $w={400} $h={240}>
        <MailRow>
          <svg width="44" height="30" viewBox="0 0 44 30">
            <rect width="44" height="30" fill="#8f8f8f" />
            <path d="M0 5 22 20 44 5M0 28 14 16" stroke="#2a2a2a" strokeWidth="3" fill="none" />
          </svg>
        </MailRow>
        <MailFoot />
      </DarkWindow>
      <DarkWindow $x={56} $y={1400} $w={2570} $h={243} />
      <SideWindow $x={2500} $y={1400} $w={339} $h={240}>
        <MicPanel>
          <svg width="32" height="48" viewBox="0 0 32 48" fill="none" stroke="#747474" strokeWidth="3">
            <rect x="9" y="-6" width="14" height="36" rx="7" />
            <path d="M3 22v2q1 12 13 12t13-12v-2M16 36v11" />
          </svg>
        </MicPanel>
        <SideFoot>.com</SideFoot>
      </SideWindow>

      <TopPeek $x={8} $y={-1} $w={2860} $h={60} />
      <TopPeek $x={24} $y={-1} $w={2810} $h={60} />
      <BrowserWindow $x={0} $y={8} $w={2870} $h={1474}>
        <BrowserTabs>
          <Cluster $gap={16}>
            <Light $c="#5a5a5a" />
            <Light $c="#5a5a5a" />
          </Cluster>
          <svg width="26" height="26" viewBox="0 0 26 26">
            <path d="M13 1v24M1 13h24" stroke="#8c8c8c" strokeWidth="4" />
          </svg>
        </BrowserTabs>
        <BrowserTools>
          <Cluster $gap={36} $pl={31}>
            <svg width="28" height="28" viewBox="0 0 28 28" fill="none" stroke="#8d8d8d" strokeWidth="3">
              <path d="M27 14H2M14 2 2 14l12 12" />
            </svg>
            <svg width="28" height="28" viewBox="0 0 28 28" fill="none" stroke="#6d6d6d" strokeWidth="3">
              <path d="M1 14h25M14 2l12 12-12 12" />
            </svg>
          </Cluster>
          <Cluster $gap={36} $pr={28}>
            <svg width="44" height="44" viewBox="0 0 44 44">
              <circle cx="22" cy="22" r="21.5" fill="#0c0c0c" />
              <circle cx="22" cy="22" r="12.5" fill="#222" stroke="#777" strokeWidth="2" strokeDasharray="12 3" />
              <path d="M6 12l6 4M38 12l-6 4M7 32l6-3M37 32l-6-3M14 40q8-3 16 0" stroke="#8a8a8a" strokeWidth="1.5" fill="none" />
              <path d="M15 22q-1-5 4-6 4-2 7 1 4 1 3 5 0 4-4 4l-2 3-2-3q-5 0-6-4Z" fill="#a5a5a5" />
              <path d="M18 20h4v3h4v-4" stroke="#333" fill="none" />
            </svg>
            <svg width="12" height="30" viewBox="0 0 12 30" fill="#979797">
              <circle cx="6" cy="5" r="3.2" />
              <circle cx="6" cy="15" r="3.2" />
              <circle cx="6" cy="25" r="3.2" />
            </svg>
          </Cluster>
          <Cluster $gap={20} $pl={31}>
            <svg width="26" height="28" viewBox="0 0 26 28">
              {[0, 1, 2].map((r) =>
                [0, 1, 2].map((c) => (
                  <rect key={`${r}${c}`} x={c * 10} y={r * 10.5} width="6" height="6.5" fill={r ? "#9a9a9a" : "#707070"} />
                ))
              )}
            </svg>
            <AppsLabel>Apps</AppsLabel>
          </Cluster>
        </BrowserTools>
      </BrowserWindow>

      <EditorWindow $x={112} $y={0} $w={2636} $h={1638}>
        <TitleBar>
          <Cluster $gap={16} $pl={16}>
            <Light $c="#7c7c7c" $edited />
            <Light $c="#a6a6a6" />
            <Light $c="#9a9a9a" />
          </Cluster>
          <Title>Bank: Citibank N.A.</Title>
          <Unregistered>UNREGISTERED</Unregistered>
        </TitleBar>
        <TabBar>
          <TabArrows>
            <svg width="44" height="20" viewBox="0 0 44 20" fill="#cfcfcf">
              <path d="M15 0v20L0 10ZM28 0v20l16-10Z" />
            </svg>
          </TabArrows>
          <Tab $w={442}>
            FormateScreenReaderMss.py
            <Cross size={16} color="#8f8f8f" />
          </Tab>
          <Tab $w={344} $active>
            Bank: Citibank N.A.
            <ModifiedDot />
          </Tab>
          <TabMenu>
            <svg width="20" height="17" viewBox="0 0 20 17">
              <path d="M0 0h20L10 17Z" fill="#d8d8d8" />
            </svg>
          </TabMenu>
        </TabBar>
        <Body>
          <Lines>
            {entries.map((e) => (
              <Line key={e.n}>
                <LineNo $active={e.n === 40}>{e.n}</LineNo>
                <LineText>
                  {e.rows.map((r, i) => (
                    <Row key={i}>{renderRow(r)}</Row>
                  ))}
                </LineText>
              </Line>
            ))}
          </Lines>
          <Minimap>
            {miniRows.map((r, i) => (
              <MiniRow key={i}>{renderMini(r)}</MiniRow>
            ))}
          </Minimap>
        </Body>
        <FindPanel>
          <Toggle>
            <svg width="34" height="28" viewBox="0 0 34 28" stroke="#666" strokeWidth="3" fill="none">
              <path d="M25 1v17M17 5.500l16 8.500M33 5.500 17 14" />
              <rect x="1" y="21" width="5" height="5" fill="#666" stroke="none" />
            </svg>
          </Toggle>
          <Toggle>Aa</Toggle>
          <Toggle>
            <svg width="38" height="18" viewBox="0 0 38 18" fill="#666">
              <path d="M6 0Q0 2 0 8v4h6V6H3.500Q3.500 3 7 2ZM14 0Q8 2 8 8v4h6V6h-2.500Q11.500 3 15 2ZM24 18q6-2 6-8V5h-6v6h2.500q0 3-3.500 5ZM32 18q6-2 6-8V5h-6v6h2.500q0 3-3.500 5Z" />
            </svg>
          </Toggle>
          <Toggle $on>
            <svg width="34" height="28" viewBox="0 0 34 28" stroke="#1a1a1a" strokeWidth="2.3" fill="none">
              <path d="M14 26Q2 25 2 14T13 5" />
              <path d="M11 0l6 5-6 5Z" fill="#1a1a1a" stroke="none" />
              <path d="M19 9.500h14M19 15.500h14M19 21.500h14" />
            </svg>
          </Toggle>
          <Toggle>
            <svg width="36" height="24" viewBox="0 0 36 24" stroke="#777" strokeWidth="2" fill="none">
              <rect x="3" y="1" width="31" height="21" strokeDasharray="4 2.500" />
              <path d="M1 12h8" strokeWidth="3" />
              <path d="M8 6.500 15 12l-7 5.500Z" fill="#777" stroke="none" />
            </svg>
          </Toggle>
          <Toggle $on>
            <svg width="34" height="24" viewBox="0 0 34 24">
              <rect x="1.5" y="1.5" width="31" height="21" rx="3" fill="none" stroke="#1a1a1a" strokeWidth="2.2" />
            </svg>
          </Toggle>
          <FindInput>
            month
            <svg width="20" height="16" viewBox="0 0 20 16">
              <path d="M0 0h20L10 16Z" fill="#b4b4b4" />
            </svg>
          </FindInput>
          <FindButton>Find</FindButton>
          <FindButton>Find Prev</FindButton>
          <FindButton>Find All</FindButton>
          <CloseFind>
            <Cross size={16} color="#777" />
          </CloseFind>
        </FindPanel>
        <StatusBar>
          <svg width="32" height="24" viewBox="0 0 32 24">
            <rect x="1" y="1" width="30" height="22" rx="2" fill="none" stroke="#666" strokeWidth="1.8" />
            <path d="M1 16.500h30V22q0 1-1 1H2q-1 0-1-1Z" fill="#666" />
          </svg>
          <StatusText $ml="24px" $ls={0.15}>2 matches</StatusText>
          <StatusText $ml="auto" $ls={-0.1}>Tab Size: 4</StatusText>
          <StatusText $ml="93px">Plain Text</StatusText>
        </StatusBar>
      </EditorWindow>

      <DockBar>
        {pinned.map((n) => <DockItem key={n} name={n} />)}
        <Divider />
        {open.map((n) => <DockItem key={n} name={n} />)}
        <Divider />
        {stacks.map((n) => <DockItem key={n} name={n} />)}
      </DockBar>
    </Desktop>
  );
}
